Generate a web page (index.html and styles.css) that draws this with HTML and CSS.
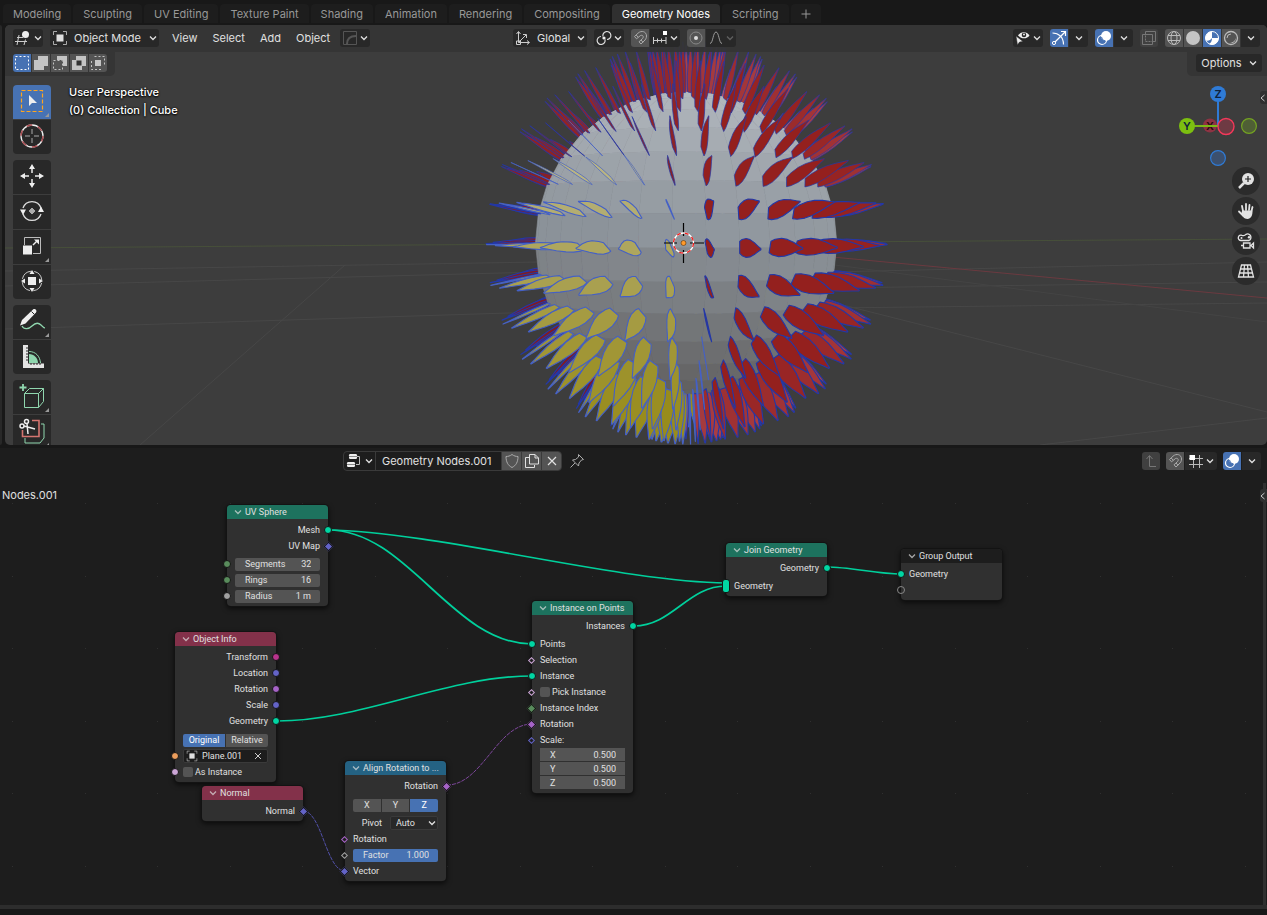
FILE: index.html
```
<!DOCTYPE html>
<html lang="en">
<head>
    <meta charset="UTF-8">
    <meta name="viewport" content="width=device-width, initial-scale=1.0">
    <title>Geometry Nodes</title>
    <link rel="stylesheet" href="styles.css">
</head>
<body>
    <svg class="defs" width="0" height="0">
        <symbol id="chev" viewBox="0 0 8 8"><path d="M1 2.5 4 5.5 7 2.5" fill="none" stroke="currentColor" stroke-width="1.3"/></symbol>
        <symbol id="magnet" viewBox="0 0 16 16"><path d="M2.500 6.500 6 3.200C9.500 0 14.500 1.500 14.500 6c0 2.300-1 3.600-2.500 5l-3 3-2-2.200 3.300-3C12 7.200 11.300 4.600 8.500 5.500L4.500 8.800z M4.200 5l2 2.200M9 10l2 2.200" fill="none" stroke="currentColor"/></symbol>
        <symbol id="overlay" viewBox="0 0 16 16"><circle cx="10" cy="6" r="5" fill="currentColor"/><circle cx="6" cy="10" r="4.500" fill="none" stroke="currentColor" stroke-width="1.200"/><path d="M5.500 7a4.500 4.500 0 0 0 4 4" fill="none" stroke="#4772b3"/></symbol>
        <symbol id="objbox" viewBox="0 0 16 16"><path d="M4.500 4.500h7v7h-7z" fill="currentColor"/><path d="M1.500 5V1.500H5M11 1.500h3.500V5M14.500 11v3.500H11M5 14.500H1.500V11" fill="none" stroke="currentColor" opacity=".7"/></symbol>
    </svg>

    <nav class="tabs">
        <button class="tab">Modeling</button>
        <button class="tab">Sculpting</button>
        <button class="tab">UV Editing</button>
        <button class="tab">Texture Paint</button>
        <button class="tab">Shading</button>
        <button class="tab">Animation</button>
        <button class="tab">Rendering</button>
        <button class="tab">Compositing</button>
        <button class="tab active">Geometry Nodes</button>
        <button class="tab">Scripting</button>
        <button class="tab add" aria-label="Add workspace"><svg width="10" height="10" viewBox="0 0 10 10"><path d="M5 .5v9M.5 5h9" stroke="currentColor"/></svg></button>
    </nav>

    <div class="upper">
        <div class="side-strip"></div>
        <main class="viewport">
            <svg class="scene" viewBox="5 25 1262 420" preserveAspectRatio="xMidYMid slice">
                <!-- floor grid -->
                <g fill="none" stroke="#474747">
                    <path d="M140 445 345 265M5 329 540 312M5 286 540 272M5 271 540 262"/>
                    <path d="M835 303 1267 412M830 272 1267 262M830 288 1267 282M830 308 1267 303M1040 445 1267 418" />
                    <path d="M835 265 1267 322" stroke="#444"/>
                </g>
                <path d="M5 248 684 243 1267 239" stroke="#47503a" fill="none"/>
                <path d="M684 243 1267 298" stroke="#6b3a40" fill="none"/>
                <g id="mesh"></g>
                <!-- 3D cursor -->
                <path d="M664 243h13M690 243h14M683.500 223v13M683.500 250v13" stroke="#000" stroke-width="1.200"/>
                <circle cx="683.500" cy="243" r="10" fill="none" stroke="#fff" stroke-width="1.300"/>
                <circle cx="683.500" cy="243" r="10" fill="none" stroke="#f02020" stroke-width="1.300" stroke-dasharray="4 4"/>
                <circle cx="683.500" cy="243" r="2.500" fill="#ff9a2a" stroke="#5a3208" stroke-width=".6"/>
            </svg>

            <header class="bar">
                <div class="group">
                    <button class="btn menu" aria-label="Editor type">
                        <svg width="18" height="16" viewBox="0 0 18 16"><path d="M3 7.500h6M1 11.500h12M5 5 3 15M11.500 9.500 10 15" stroke="#ccc" fill="none"/><circle cx="11.500" cy="4.500" r="3.500" fill="#eee"/></svg>
                        <svg class="chev"><use href="#chev"/></svg>
                    </button>
                    <label class="btn drop mode">
                        <svg width="16" height="16"><use href="#objbox"/></svg>
                        <select aria-label="Mode"><option>Object Mode</option></select>
                        <svg class="chev"><use href="#chev"/></svg>
                    </label>
                    <div class="menus">
                        <button>View</button>
                        <button>Select</button>
                        <button>Add</button>
                        <button>Object</button>
                    </div>
                    <button class="btn menu" aria-label="Curve">
                        <svg width="16" height="16" viewBox="0 0 16 16"><path d="M1.500 1.500h13v13h-13z" fill="none" stroke="#555"/><path d="M5 14c0-5 3-8 9-8" fill="none" stroke="#555" stroke-width="2"/></svg>
                        <svg class="chev"><use href="#chev"/></svg>
                    </button>
                </div>
                <div class="group center">
                    <label class="btn drop orient">
                        <svg width="16" height="16" viewBox="0 0 16 16"><path d="M3.500 2v10.500H14M1.500 4l2-2.500 2 2.500M12 10.500l2.500 2-2.500 2M3.500 12.500 11 5M8 4.500h3.500V8M1.500 11h4v3.500h-4z" fill="none" stroke="#ccc"/></svg>
                        <select aria-label="Orientation"><option>Global</option></select>
                        <svg class="chev"><use href="#chev"/></svg>
                    </label>
                    <button class="btn menu" aria-label="Pivot point">
                        <svg width="16" height="16" viewBox="0 0 16 16"><g fill="none" stroke="#ddd" stroke-width="1.200"><path d="M7 6.500A4 4 0 1 1 11 9.500M9 9.500A4 4 0 1 1 5 6.500"/></g><circle cx="8" cy="8" r="1.600" fill="#eee"/></svg>
                        <svg class="chev"><use href="#chev"/></svg>
                    </button>
                    <div class="join">
                        <button class="btn icon lit" aria-label="Snap"><svg width="16" height="16"><use href="#magnet"/></svg></button>
                        <button class="btn menu" aria-label="Snap to">
                            <svg width="16" height="16" viewBox="0 0 16 16"><path d="M1.500 7v7M14 7v7M1 10.500h13M5.500 8.500v4M9.500 8.500v4" stroke="#ccc"/><path d="M11 1h4v4h-4z" fill="#fff"/></svg>
                            <svg class="chev"><use href="#chev"/></svg>
                        </button>
                    </div>
                    <div class="join">
                        <button class="btn icon lit" aria-label="Proportional editing"><svg width="16" height="16" viewBox="0 0 16 16"><circle cx="8" cy="8" r="6" fill="none" stroke="#888"/><circle cx="8" cy="8" r="2" fill="#ddd"/></svg></button>
                        <button class="btn menu dim" aria-label="Falloff">
                            <svg width="16" height="16" viewBox="0 0 16 16"><path d="M2 13.500c3 0 3-11.500 6-11.500s3 11.500 6 11.500" fill="none" stroke="#999"/></svg>
                            <svg class="chev"><use href="#chev"/></svg>
                        </button>
                    </div>
                </div>
                <div class="group right">
                    <button class="btn menu" aria-label="Visibility">
                        <svg width="16" height="16" viewBox="0 0 16 16"><path d="M3 5.500C5.500 1 12 1 14.500 5.500 12 9 7 9.500 3 5.500z" fill="#eee"/><circle cx="9" cy="5" r="2.300" fill="#282828"/><circle cx="9" cy="4.500" r="1" fill="#eee"/><path d="M1 6l7 5.500-3.500.5L2.500 15z" fill="#eee" stroke="#282828" stroke-width=".5"/></svg>
                        <svg class="chev"><use href="#chev"/></svg>
                    </button>
                    <div class="join">
                        <button class="btn icon on" aria-label="Gizmos"><svg width="16" height="16" viewBox="0 0 16 16"><path d="M1.500 3c6 0 11 4 11 11.500M4 12 14 2M10 1.500h4.500V6" fill="none" stroke="#fff" stroke-width="1.200"/><circle cx="3" cy="13" r="1.600" fill="none" stroke="#fff"/></svg></button>
                        <button class="btn chevbtn" aria-label="Gizmo options"><svg class="chev"><use href="#chev"/></svg></button>
                    </div>
                    <div class="join">
                        <button class="btn icon on" aria-label="Overlays"><svg width="16" height="16"><use href="#overlay"/></svg></button>
                        <button class="btn chevbtn" aria-label="Overlay options"><svg class="chev"><use href="#chev"/></svg></button>
                    </div>
                    <button class="btn icon faint" aria-label="X-ray"><svg width="16" height="16" viewBox="0 0 16 16"><path d="M1.500 4.500h10v10h-10zM4.500 4V1.500h10v10H12" fill="none" stroke="#777"/><path d="M4.500 5.500v6h7" fill="none" stroke="#777" stroke-dasharray="2 1"/></svg></button>
                    <div class="join">
                        <button class="btn icon lit" aria-label="Wireframe"><svg width="16" height="16" viewBox="0 0 16 16"><g fill="none" stroke="#bbb"><circle cx="8" cy="8" r="6.500"/><ellipse cx="8" cy="8" rx="3" ry="6.500"/><path d="M2 5.500h12M2 10.500h12"/></g></svg></button>
                        <button class="btn icon lit" aria-label="Solid"><svg width="16" height="16" viewBox="0 0 16 16"><circle cx="8" cy="8" r="7" fill="#c4c4c4"/></svg></button>
                        <button class="btn icon on" aria-label="Material preview"><svg width="16" height="16" viewBox="0 0 16 16"><circle cx="8" cy="8" r="6.500" fill="#4772b3" stroke="#fff"/><path d="M8 1.500A6.500 6.500 0 0 0 2 10.500c2 .5 4.500 0 6-2.500z" fill="#fff"/><path d="M8 8h6.500A6.500 6.500 0 0 1 5 14c2-1 3-3 3-6z" fill="#fff"/></svg></button>
                        <button class="btn icon lit" aria-label="Rendered"><svg width="16" height="16" viewBox="0 0 16 16"><circle cx="8" cy="8" r="6.500" fill="none" stroke="#bbb" stroke-width="1.300"/><path d="M4 8a4 4 0 0 1 4-4" fill="none" stroke="#bbb"/><path d="M13 8a5 5 0 0 1-6 5c3-.5 5-2 6-5z" fill="#ccc"/></svg></button>
                        <button class="btn chevbtn" aria-label="Shading options"><svg class="chev"><use href="#chev"/></svg></button>
                    </div>
                </div>
            </header>

            <div class="subbar">
                <div class="select-modes join">
                    <button class="btn icon on" aria-label="Set"><svg width="16" height="16" viewBox="0 0 16 16"><path d="M1.500 1.500h13v13h-13z" fill="none" stroke="#fff" stroke-dasharray="2 2"/></svg></button>
                    <button class="btn icon lit" aria-label="Extend"><svg width="16" height="16" viewBox="0 0 16 16"><path d="M5 1h10v10h-4v4H1V5h4z" fill="#c4c4c4"/></svg></button>
                    <button class="btn icon lit" aria-label="Subtract"><svg width="16" height="16" viewBox="0 0 16 16"><path d="M5 1h10v10h-4V5H5z" fill="#c4c4c4"/><path d="M1.500 5.500h9v9h-9z" fill="none" stroke="#c4c4c4" stroke-dasharray="2 2"/></svg></button>
                    <button class="btn icon lit" aria-label="Difference"><svg width="16" height="16" viewBox="0 0 16 16"><path d="M5 1h10v10h-4v4H1V5h4z" fill="#c4c4c4"/><path d="M5.500 5.500h5v5h-5z" fill="#333"/></svg></button>
                    <button class="btn icon lit" aria-label="Intersect"><svg width="16" height="16" viewBox="0 0 16 16"><path d="M5 5h6v6H5z" fill="#c4c4c4"/><path d="M4.500 1.500h10v10M11 14.500H1.500v-10" fill="none" stroke="#c4c4c4" stroke-dasharray="2 2"/></svg></button>
                </div>
                <div class="options-tab">
                    <button class="btn options">Options <svg class="chev"><use href="#chev"/></svg></button>
                </div>
            </div>

            <div class="work">
                <div class="toolbar">
                    <div class="tools">
                        <button class="tool on more" aria-label="Select box"><svg viewBox="0 0 26 26"><path d="M2.500 2.500h21v21h-21z" fill="none" stroke="#ffa51f" stroke-width="1.200" stroke-dasharray="4 2"/><path d="M10 7v11l3-3h5z" fill="#eee"/></svg></button>
                        <button class="tool" aria-label="Cursor"><svg viewBox="0 0 26 26"><circle cx="13" cy="13" r="11" fill="none" stroke="#eee" stroke-width="1.300"/><circle cx="13" cy="13" r="11" fill="none" stroke="#a8474c" stroke-width="1.400" stroke-dasharray="5.700 5.800"/><path d="M13 6v5M13 15v5M6 13h5M15 13h5" stroke="#aaa"/></svg></button>
                    </div>
                    <div class="tools">
                        <button class="tool" aria-label="Move"><svg viewBox="0 0 26 26"><path d="M13 1l3 5h-6zM13 25l3-5h-6zM1 13l5-3v6zM25 13l-5-3v6z" fill="#eee"/><path d="M13 6v4M13 16v4M6 13h4M16 13h4" stroke="#eee" stroke-width="1.500"/></svg></button>
                        <button class="tool" aria-label="Rotate"><svg viewBox="0 0 26 26"><path d="M4 10a9.500 9.500 0 0 1 18 0M22 16a9.500 9.500 0 0 1-18 0" fill="none" stroke="#ddd" stroke-width="1.300"/><path d="M13 10l3 3-3 3-3-3z" fill="#aaa" stroke="#aaa"/><path d="M1 11.500h6L4 17zM19 14h6l-3-5.500z" fill="#eee"/></svg></button>
                        <button class="tool more" aria-label="Scale"><svg viewBox="0 0 26 26"><path d="M5.500 12V4.500h16v16H14" fill="none" stroke="#bbb"/><path d="M4 12.500h9v9H4z" fill="#eee"/><path d="M14 12l4-4" stroke="#eee" stroke-width="1.500"/><path d="M15 6.500h5v5z" fill="#eee"/></svg></button>
                        <button class="tool" aria-label="Transform"><svg viewBox="0 0 26 26"><circle cx="13" cy="13" r="9.800" fill="none" stroke="#ccc" stroke-dasharray="12 3.400" stroke-dashoffset="-2"/><path d="M9 9h8v8H9z" fill="#eee"/><path d="M13 2l2.500 4h-5zM13 24l2.500-4h-5zM2 13l4-2.500v5zM24 13l-4-2.500v5z" fill="#eee"/></svg></button>
                    </div>
                    <div class="tools">
                        <button class="tool more" aria-label="Annotate"><svg viewBox="0 0 26 26"><path d="M3 18c2 4 7 3 10 0s6-4 9-1 2 2 4 3" fill="none" stroke="#8fd6ae" stroke-width="1.300"/><path d="M1 17.500 3 12 14 1.500c2-1.500 4.500 1 3 3L6.500 15.500z" fill="#eee"/><path d="M12.500 3.500l3 3" stroke="#282828"/></svg></button>
                        <button class="tool" aria-label="Measure"><svg viewBox="0 0 26 26"><path d="M10 11c5 0 9 4 9 9h-9z" fill="#8fd6ae"/><path d="M10 8.500c6.500 0 11 4.500 11.500 11.500" fill="none" stroke="#8fd6ae"/><path d="M4 2h5v18.500h16V25H4z" fill="#e4e4e4"/><path d="M9 5H7M9 8H7M9 11H7M9 14H7M9 17H7M12 20v2M15 20v2M18 20v2M21 20v2" stroke="#282828"/></svg></button>
                    </div>
                    <div class="tools">
                        <button class="tool more" aria-label="Add cube"><svg viewBox="0 0 26 26"><path d="M5.500 10.500h14v14h-14zM5.500 10.500l5-5h14l-5 5M24.500 5.500v13l-5 6" fill="none" stroke="#8fd6ae"/><path d="M4 1v7M.5 4.500h7" stroke="#8fd6ae" stroke-width="1.800"/></svg></button>
                        <button class="tool more" aria-label="Trim"><svg viewBox="0 0 26 26"><path d="M6 20v5h15l4-5V6h-3" fill="none" stroke="#8fd6ae"/><path d="M13 2.500h7v16H3.500V12" fill="none" stroke="#d3746f" stroke-width="1.600"/><g fill="none" stroke="#eee" stroke-width="1.500"><circle cx="3" cy="8" r="2"/><circle cx="7.500" cy="3.500" r="2"/><path d="M5 8l11 3M8 5.500 9 16"/></g></svg></button>
                    </div>
                </div>
                <div class="info">
                    <div>User Perspective</div>
                    <div>(0) Collection | Cube</div>
                </div>
                <div class="nav-column">
                    <svg class="gizmo" width="82" height="82" viewBox="1178 85 82 82">
                        <circle cx="1210" cy="125.500" r="7" fill="#8d3343"/>
                        <text x="1210" y="130" class="axis axis-x">X</text>
                        <path d="M1218 126V100" stroke="#2f7bd6" stroke-width="2"/>
                        <path d="M1218 126h-26" stroke="#7cb716" stroke-width="2"/>
                        <circle cx="1218" cy="94" r="8" fill="#2f7bd6"/>
                        <text x="1218" y="98" class="axis">Z</text>
                        <circle cx="1187" cy="126" r="8" fill="#7cbf10"/>
                        <text x="1187" y="130" class="axis">Y</text>
                        <circle cx="1226" cy="126.500" r="8" fill="#6e3a43" stroke="#f4385a" stroke-width="1.400"/>
                        <circle cx="1249" cy="126" r="7.400" fill="#4f5f35" stroke="#74a322" stroke-width="1.200"/>
                        <circle cx="1218" cy="158" r="7.400" fill="#3c506e" stroke="#2f7bd6" stroke-width="1.200"/>
                    </svg>
                    <button class="nav" aria-label="Zoom"><svg width="18" height="18" viewBox="0 0 18 18"><circle cx="11" cy="7" r="6" fill="#e2e2e2"/><path d="M7 11l-5 5" stroke="#e2e2e2" stroke-width="2.500"/><path d="M11 4v6M8 7h6" stroke="#222" stroke-width="1.200"/></svg></button>
                    <button class="nav" aria-label="Pan"><svg width="18" height="18" viewBox="0 0 18 18"><path d="M6 9 5 4M9 8V2M12 8l.5-5M14.500 9l1-4M2 9.500l4 4" stroke="#e2e2e2" stroke-width="1.800" stroke-linecap="round"/><path d="M5 8.500h10.400c.5 4.500-1.500 8.500-5 8.500-3.500 0-5-3-6-5z" fill="#e2e2e2"/></svg></button>
                    <button class="nav" aria-label="Camera"><svg width="18" height="18" viewBox="0 0 18 18"><g fill="none" stroke="#e2e2e2" stroke-width="1.300"><path d="M4 8.500a2.700 2.700 0 1 1 1-5.200c1.500.5 3 .2 4-1a3.300 3.300 0 1 1 3 6.200z"/><path d="M6.500 11h6.500v5H6.500zM4 13.500h2M16.500 11v5L14 13.500z"/></g><circle cx="4.500" cy="6" r="1" fill="#e2e2e2"/><circle cx="12" cy="5.200" r="1.200" fill="#e2e2e2"/></svg></button>
                    <button class="nav" aria-label="Perspective"><svg width="18" height="18" viewBox="0 0 18 18"><path d="M4.500 3h9l3 12h-15zM3.500 7h11M2.500 11h13M7.500 3l-1 12M10.500 3l1 12" fill="none" stroke="#e2e2e2" stroke-width="1.300"/></svg></button>
                </div>
            </div>
            <button class="sidebar-toggle" aria-label="Show sidebar"><svg width="5" height="8" viewBox="0 0 5 8"><path d="M4.500 1 1 4l3.500 3" fill="none" stroke="#ccc"/></svg></button>
        </main>
    </div>

    <section class="editor">
        <svg class="wires">
            <defs>
                <pattern id="dots" x="12" y="55" width="145" height="145" patternUnits="userSpaceOnUse">
                    <path d="M0 0h1v1H0zM73 0h1v1h-1zM0 73h1v1H0zM73 73h1v1h-1z" fill="#303030"/>
                </pattern>
            </defs>
            <rect width="100%" height="100%" fill="url(#dots)"/>
            <g class="wire">
                <path d="M328 82C438 84 620 134 726 135"/>
                <path d="M328 82C408 82 452 196 532 196"/>
                <path d="M277 273C362 273 447 228 532 228"/>
                <path d="M634 178C672 178 688 138 726 138"/>
                <path d="M827 119C850 119 878 126 901 126"/>
            </g>
            <path class="wire-thin rot" d="M447 337C482 337 497 276 532 276"/>
            <path class="wire-thin vec" d="M303 363C322 363 326 423 345 423"/>
        </svg>

        <header class="node-bar">
            <div class="datablock">
                <button class="cell type" aria-label="Browse node tree">
                    <svg width="16" height="16" viewBox="0 0 16 16"><rect x="3" y="1" width="8" height="5" rx="1.200" fill="#eee"/><rect x="1" y="9" width="8" height="5" rx="1.200" fill="#eee"/><path d="M3 3.500h8M1 11.500h8" stroke="#888"/><path d="M11 3.500h2.500v8H10" fill="none" stroke="#bbb"/></svg>
                    <svg class="chev"><use href="#chev"/></svg>
                </button>
                <input class="tree-name" aria-label="Node tree name" value="Geometry Nodes.001">
                <button class="cell lit" aria-label="Fake user"><svg width="16" height="16" viewBox="0 0 16 16"><path d="M8 1.500c2 1.500 4 2 6 2 0 5.500-2 9-6 11-4-2-6-5.500-6-11 2 0 4-.5 6-2z" fill="none" stroke="#aaa"/></svg></button>
                <button class="cell lit" aria-label="New"><svg width="16" height="16" viewBox="0 0 16 16"><path d="M5.500 1.500H11l3.500 3.500v6h-9zM11 1.500V5h3.500M5 4.500H1.500v10h9V12" fill="none" stroke="#e0e0e0"/></svg></button>
                <button class="cell lit" aria-label="Unlink"><svg width="16" height="16" viewBox="0 0 16 16"><path d="M4 4l8 8M12 4l-8 8" stroke="#e0e0e0" stroke-width="1.200"/></svg></button>
            </div>
            <button class="pin" aria-label="Pin"><svg width="16" height="16" viewBox="0 0 16 16"><path d="M9.500 1.500l5 5-2 .5-2.500 3-.5 3-6-6 3-.5 3-2.500zM6 10l-4.500 4.500" fill="none" stroke="#aaa"/></svg></button>
            <div class="node-tools">
                <button class="btn icon faint" aria-label="Parent"><svg width="16" height="16" viewBox="0 0 16 16"><path d="M6.500 3v10.500H13M3.500 6l3-3.500 3 3.500" fill="none" stroke="#777"/></svg></button>
                <div class="join">
                    <button class="btn icon lit" aria-label="Snap"><svg width="16" height="16"><use href="#magnet"/></svg></button>
                    <button class="btn menu" aria-label="Snap to"><svg width="16" height="16" viewBox="0 0 16 16"><path d="M5.500 2v13M11.500 2v13M1 5.500h14M1 11.500h14" stroke="#bbb"/><path d="M1.500 2H7v5H1.500z" fill="#fff"/></svg><svg class="chev"><use href="#chev"/></svg></button>
                </div>
                <div class="join">
                    <button class="btn icon on" aria-label="Overlays"><svg width="16" height="16"><use href="#overlay"/></svg></button>
                    <button class="btn chevbtn" aria-label="Overlay options"><svg class="chev"><use href="#chev"/></svg></button>
                </div>
            </div>
        </header>
        <div class="crumb">Nodes.001</div>

        <article class="node uv-sphere">
            <h2 class="geo"><svg class="chev"><use href="#chev"/></svg>UV Sphere</h2>
            <div class="row out">Mesh<i class="sock green"></i></div>
            <div class="row out">UV Map<i class="sock dia blue"></i></div>
            <label class="row space"><i class="sock int"></i><span class="field"><span>Segments</span><input value="32"></span></label>
            <label class="row"><i class="sock int"></i><span class="field"><span>Rings</span><input value="16"></span></label>
            <label class="row"><i class="sock float"></i><span class="field"><span>Radius</span><input value="1 m"></span></label>
        </article>

        <article class="node object-info">
            <h2 class="inp"><svg class="chev"><use href="#chev"/></svg>Object Info</h2>
            <div class="row out">Transform<i class="sock matrix"></i></div>
            <div class="row out">Location<i class="sock blue"></i></div>
            <div class="row out">Rotation<i class="sock purple"></i></div>
            <div class="row out">Scale<i class="sock blue"></i></div>
            <div class="row out">Geometry<i class="sock green"></i></div>
            <div class="row choice"><div class="seg"><button class="on">Original</button><button>Relative</button></div></div>
            <div class="row"><i class="sock object"></i><div class="picker"><svg width="12" height="12" viewBox="0 0 16 16"><use href="#objbox"/></svg><input aria-label="Object" value="Plane.001"><button aria-label="Clear"><svg width="8" height="8" viewBox="0 0 8 8"><path d="M1 1l6 6M7 1 1 7" stroke="#ccc"/></svg></button></div></div>
            <label class="row check"><i class="sock bool"></i><input type="checkbox">As Instance</label>
        </article>

        <article class="node normal">
            <h2 class="inp"><svg class="chev"><use href="#chev"/></svg>Normal</h2>
            <div class="row out">Normal<i class="sock dia blue"></i></div>
        </article>

        <article class="node align">
            <h2 class="conv"><svg class="chev"><use href="#chev"/></svg>Align Rotation to ...</h2>
            <div class="row out">Rotation<i class="sock dia purple"></i></div>
            <div class="row choice"><div class="seg"><button>X</button><button>Y</button><button class="on">Z</button></div></div>
            <label class="row space pivot"><span>Pivot</span><span class="mini"><select><option>Auto</option></select><svg class="chev"><use href="#chev"/></svg></span></label>
            <div class="row"><i class="sock dia purple open"></i>Rotation</div>
            <label class="row"><i class="sock dia float open"></i><span class="field full"><span>Factor</span><input value="1.000"></span></label>
            <div class="row"><i class="sock dia blue"></i>Vector</div>
        </article>

        <article class="node instance">
            <h2 class="geo"><svg class="chev"><use href="#chev"/></svg>Instance on Points</h2>
            <div class="row out">Instances<i class="sock green"></i></div>
            <div class="row space"><i class="sock green"></i>Points</div>
            <div class="row"><i class="sock dia bool open"></i>Selection</div>
            <div class="row"><i class="sock green"></i>Instance</div>
            <label class="row check"><i class="sock dia bool open"></i><input type="checkbox">Pick Instance</label>
            <div class="row"><i class="sock dia int"></i>Instance Index</div>
            <div class="row"><i class="sock dia purple"></i>Rotation</div>
            <div class="row"><i class="sock dia blue open"></i>Scale:</div>
            <div class="vector">
                <label class="field"><span>X</span><input value="0.500"></label>
                <label class="field"><span>Y</span><input value="0.500"></label>
                <label class="field"><span>Z</span><input value="0.500"></label>
            </div>
        </article>

        <article class="node join-geometry">
            <h2 class="geo"><svg class="chev"><use href="#chev"/></svg>Join Geometry</h2>
            <div class="row out">Geometry<i class="sock green"></i></div>
            <div class="row space"><i class="sock green multi"></i>Geometry</div>
        </article>

        <article class="node group-output">
            <h2 class="plain"><svg class="chev"><use href="#chev"/></svg>Group Output</h2>
            <div class="row"><i class="sock green"></i>Geometry</div>
            <div class="row"><i class="sock virtual"></i></div>
        </article>

        <div class="scrollbar"></div>
        <button class="sidebar-toggle low" aria-label="Show sidebar"><svg width="5" height="8" viewBox="0 0 5 8"><path d="M4.500 1 1 4l3.500 3" fill="none" stroke="#ccc"/></svg></button>
    </section>
    <footer class="status"></footer>

    <script src="script.js"></script>
</body>
</html>
```
FILE: styles.css
```
* {
    box-sizing: border-box;
}

body {
    margin: 0;
    height: 100vh;
    display: flex;
    flex-direction: column;
    background: #181818;
    color: #e0e0e0;
    font-family: Inter, "Liberation Sans", sans-serif;
    font-size: 11px;
    overflow: hidden;
}

button, input, select {
    font: inherit;
    color: inherit;
    border: 0;
    padding: 0;
    margin: 0;
    background: none;
    outline: none;
}

svg {
    display: block;
    flex: none;
}

.defs {
    position: absolute;
}

.chev {
    width: 8px;
    height: 8px;
}

/* workspace tabs */
.tabs {
    display: flex;
    flex: none;
    gap: 2px;
    height: 25px;
    padding: 4px 3px 2px;
}

.tab {
    padding: 0 10px;
    color: #989898;
    background: #1d1d1d;
    border-radius: 4px 4px 0 0;
    white-space: nowrap;
}

.tab.active {
    color: #fff;
    background: #303030;
}

/* 3D viewport */
.upper {
    display: flex;
    flex: 420 1 0;
    min-height: 0;
    gap: 3px;
}

.side-strip {
    width: 2px;
    background: #282828;
    border-radius: 0 4px 4px 0;
}

.viewport {
    position: relative;
    display: flex;
    flex-direction: column;
    flex: 1;
    min-width: 0;
    overflow: hidden;
    background: #3d3d3d;
    border-radius: 5px;
}

.scene {
    position: absolute;
    width: 100%;
    height: 100%;
}

.bar {
    position: relative;
    display: flex;
    flex: none;
    align-items: center;
    height: 27px;
    padding: 0 7px 1px 8px;
    background: rgba(53, 53, 53, 0.93);
}

.group {
    display: flex;
    align-items: center;
    gap: 7px;
}

.group.center {
    margin-left: 143px;
}

.group.right {
    margin-left: auto;
}

.join {
    display: flex;
    gap: 1px;
}

.btn {
    display: flex;
    align-items: center;
    justify-content: center;
    height: 18px;
    background: #282828;
    border-radius: 3px;
}

.join .btn:not(:first-child) {
    border-top-left-radius: 0;
    border-bottom-left-radius: 0;
}

.join .btn:not(:last-child) {
    border-top-right-radius: 0;
    border-bottom-right-radius: 0;
}

.btn.icon {
    width: 18px;
}

.btn.menu {
    width: 30px;
    gap: 2px;
}

.btn.chevbtn {
    width: 19px;
}

.lit,
.btn.lit {
    background: #545454;
    color: #aaa;
}

.btn.on {
    background: #4772b3;
    color: #fff;
}

.btn.faint {
    background: #404040;
}

.btn.dim .chev {
    opacity: 0.3;
}

.drop {
    justify-content: flex-start;
    gap: 4px;
    padding: 0 2px;
}

.drop.mode {
    width: 109px;
}

.drop.orient {
    width: 74px;
}

.drop select {
    appearance: none;
    flex: 1;
    min-width: 0;
    padding-left: 2px;
}

.menus {
    display: flex;
    gap: 15px;
    margin: 0 3px 0 6px;
}

.subbar {
    position: relative;
    display: flex;
    flex: none;
    justify-content: space-between;
    height: 24px;
}

.select-modes,
.options-tab {
    padding: 2px 8px;
    background: #353535;
    border-radius: 0 0 5px 0;
}

.options-tab {
    padding: 2px 5px 2px 9px;
    border-radius: 0 0 0 5px;
}

.btn.options {
    width: 66px;
    gap: 7px;
}

.work {
    position: relative;
    display: flex;
    flex: 1;
    min-height: 0;
    padding: 9px 7px 0 8px;
}

.toolbar {
    display: flex;
    flex-direction: column;
    gap: 6px;
}

.tools {
    display: flex;
    flex: none;
    flex-direction: column;
    gap: 1px;
    border-radius: 4px;
    overflow: hidden;
}

.tool {
    position: relative;
    display: flex;
    align-items: center;
    justify-content: center;
    width: 38px;
    height: 34px;
    padding-bottom: 2px;
    background: #282828;
}

.tool svg {
    width: 26px;
    height: 26px;
}

.tool.on {
    background: #4772b3;
}

.tool.more::after {
    content: "";
    position: absolute;
    right: 2px;
    bottom: 2px;
    border: 2px solid #999;
    border-top-color: transparent;
    border-left-color: transparent;
}

.info {
    margin-left: 18px;
    margin-top: -2px;
    font-weight: 500;
    line-height: 18px;
    color: #fff;
    text-shadow: 0 0 2px #000, 0 1px 2px #000;
}

.nav-column {
    display: flex;
    flex-direction: column;
    align-items: flex-end;
    gap: 2px;
    margin-left: auto;
}

.gizmo {
    margin-bottom: -2px;
}

.axis {
    font-size: 11px;
    font-weight: 600;
    fill: #10233c;
    text-anchor: middle;
}

.axis-x {
    fill: #26090f;
}

.nav {
    display: flex;
    align-items: center;
    justify-content: center;
    width: 28px;
    height: 28px;
    border-radius: 50%;
    background: #2b2b2b;
}

.sidebar-toggle {
    position: absolute;
    right: 0;
    top: 66px;
    width: 7px;
    height: 13px;
    background: #303030;
    border-radius: 3px 0 0 3px;
}

/* node editor */
.editor {
    position: relative;
    flex: 457 1 0;
    min-height: 0;
    margin-top: 3px;
    overflow: hidden;
    background: #1d1d1d;
}

.wires {
    position: absolute;
    width: 100%;
    height: 100%;
}

.wire path {
    fill: none;
    stroke: #00d09c;
    stroke-width: 1.7px;
}

.wire-thin {
    fill: none;
    stroke-width: 1px;
    stroke-dasharray: 4 1;
}

.rot {
    stroke: #7d479b;
}

.vec {
    stroke: #5150a8;
}

.node-bar {
    position: relative;
    display: flex;
    align-items: center;
    height: 26px;
    padding: 0 6px 0 343px;
}

.datablock {
    display: flex;
    height: 20px;
    border: 1px solid #3a3a3a;
    border-radius: 4px;
    overflow: hidden;
}

.cell {
    display: flex;
    align-items: center;
    justify-content: center;
    width: 20px;
    border-left: 1px solid #3a3a3a;
}

.cell.type {
    width: 31px;
    gap: 3px;
    border-left: 0;
}

.tree-name {
    width: 126px;
    padding-left: 6px;
    border-left: 1px solid #3a3a3a;
}

.pin {
    margin-left: 7px;
}

.node-tools {
    display: flex;
    gap: 6px;
    margin-left: auto;
}

.node-tools .menu {
    width: 32px;
}

.crumb {
    position: relative;
    padding: 14px 2px;
    line-height: 14px;
}

.node {
    position: absolute;
    width: 101px;
    padding-bottom: 2px;
    background: #303030;
    border-radius: 4px;
    box-shadow: 0 0 0 1px #131313, 0 2px 5px 1px rgba(0, 0, 0, 0.6);
    font-family: Roboto, "Liberation Sans", sans-serif;
    font-size: 9px;
}

.uv-sphere { left: 227px; top: 57px; }
.object-info { left: 175px; top: 184px; }
.normal { left: 202px; top: 338px; }
.align { left: 345px; top: 313px; }
.instance { left: 532px; top: 153px; }
.join-geometry { left: 726px; top: 95px; }
.group-output { left: 901px; top: 101px; }

.node h2 {
    display: flex;
    align-items: center;
    gap: 3px;
    height: 14px;
    margin: 0 0 3px;
    padding: 0 0 1px 7px;
    font-size: 9px;
    font-weight: 400;
    white-space: nowrap;
    border-radius: 4px 4px 0 0;
}

.node h2 .chev {
    opacity: 0.7;
}

.geo { background: #1d725e; }
.inp { background: #83314a; }
.conv { background: #246283; }
.plain { background: #1d1d1d; }

.row {
    position: relative;
    display: flex;
    align-items: center;
    height: 16px;
    padding: 0 8px;
    white-space: nowrap;
}

.row.out {
    justify-content: flex-end;
}

.row.space {
    margin-top: 2px;
}

.row.choice {
    margin-top: 3px;
}

.sock {
    position: absolute;
    left: -4px;
    width: 8px;
    height: 8px;
    border: 1px solid #151515;
    border-radius: 50%;
}

.out .sock {
    left: auto;
    right: -4px;
}

.sock.dia {
    border-radius: 0;
    transform: rotate(45deg);
    width: 7px;
    height: 7px;
}

.green { background: #00d6a3; }
.blue { background: #6363c7; }
.purple { background: #a663c7; }
.int { background: #598c5c; }
.float { background: #a1a1a1; }
.matrix { background: #b8338c; }
.object { background: #ed9e5c; }
.bool { background: #cca6d6; }

.sock.open {
    left: -3px;
    width: 5px;
    height: 5px;
    background: #1d1d1d;
}

.open.purple { border-color: #a663c7; }
.open.float { border-color: #a1a1a1; }
.open.bool { border-color: #cca6d6; }
.open.blue { border-color: #6363c7; }

.sock.multi {
    height: 14px;
    border-radius: 3px;
}

.sock.virtual {
    border-color: #888;
}

.field {
    display: flex;
    flex: 1;
    align-items: center;
    justify-content: space-between;
    height: 13px;
    padding: 0 9px 0 10px;
    background: #545454;
    border-radius: 2px;
}

.field input {
    width: 26px;
    text-align: right;
}

.field.full {
    background: #4772b3;
}

.vector {
    display: flex;
    flex-direction: column;
    gap: 1px;
    margin: 0 8px 2px;
}

.vector .field {
    flex: none;
    border-radius: 0;
}

.seg {
    display: flex;
    flex: 1;
    gap: 1px;
    height: 13px;
    border-radius: 2px;
    overflow: hidden;
}

.seg button {
    flex: 1;
    background: #545454;
}

.seg .on {
    background: #4772b3;
    color: #fff;
}

.picker {
    display: flex;
    flex: 1;
    align-items: center;
    gap: 4px;
    height: 14px;
    padding: 0 5px 0 2px;
    background: #1d1d1d;
    border: 1px solid #3a3a3a;
    border-radius: 2px;
}

.picker input {
    flex: 1;
    width: 20px;
}

.check {
    gap: 2px;
}

.check input {
    appearance: none;
    width: 10px;
    height: 10px;
    background: #545454;
    border-radius: 2px;
}

.pivot {
    justify-content: flex-end;
    gap: 8px;
}

.mini {
    display: flex;
    align-items: center;
    width: 48px;
    height: 14px;
    padding: 0 1px 0 5px;
    background: #282828;
    border: 1px solid #3a3a3a;
    border-radius: 2px;
}

.mini select {
    appearance: none;
    flex: 1;
    min-width: 0;
}

.scrollbar {
    position: absolute;
    right: 1px;
    top: 35px;
    bottom: 0;
    width: 3px;
    background: #303030;
}

.sidebar-toggle.low {
    top: 41px;
}

.status {
    flex: none;
    height: 10px;
    border-top: 4px solid #2d2d2d;
}
```
FILE: script.js
```
// Sphere with one petal per vertex, aligned to the normal
const DIST = 6.45, FOCAL = 962, CX = 686, CY = 243;
const TILT = 1.5 * Math.PI / 180;
const STEP = Math.PI / 16;
const FIRST = 17.2 * Math.PI / 180;

function project(p) {
    const y = p[1] * Math.cos(TILT) - p[2] * Math.sin(TILT);
    const z = p[1] * Math.sin(TILT) + p[2] * Math.cos(TILT);
    const s = FOCAL / (DIST - z);
    return { x: CX + p[0] * s + z * 2, y: CY - y * s, z: z };
}

function normal(lat, az) {
    return [Math.cos(lat) * Math.sin(az), Math.sin(lat), Math.cos(lat) * Math.cos(az)];
}

function mix(a, b, t) {
    t = Math.max(0, Math.min(1, t));
    return "rgb(" + a.map((v, i) => Math.round(v + (b[i] - v) * t)).join(",") + ")";
}

function points(list) {
    return list.map(p => p.x.toFixed(1) + "," + p.y.toFixed(1)).join(" ");
}

// distance along the petal, half width
const profile = [[0, 0.034], [0.12, 0.046], [0.32, 0.053], [0.5, 0.048], [0.7, 0.033], [0.88, 0.014], [1, 0.003]];

function petal(lat, az) {
    const n = normal(lat, az);
    const b = az - FIRST;
    const th = [Math.sin(lat) * Math.sin(az), -Math.cos(lat), Math.sin(lat) * Math.cos(az)];
    const ph = [Math.cos(az), 0, -Math.sin(az)];
    const w = th.map((v, i) => -Math.cos(b) * v + Math.sin(b) * ph[i]);
    const at = (t, h) => project(n.map((v, i) => v * (1 + 0.32 * t) + w[i] * h));
    const list = profile.map(p => at(p[0], p[1])).concat(profile.slice().reverse().map(p => at(p[0], -p[1])));
    let area = 0;
    list.forEach((p, i) => {
        const q = list[(i + 1) % list.length];
        area += p.x * q.y - q.x * p.y;
    });
    const base = project(n);
    const red = area > 0;
    let fill;
    if (!red) fill = n[1] > 0 ? mix([172, 165, 98], [190, 186, 140], n[1] * 2) : mix([174, 166, 94], [152, 140, 28], -n[1] * 1.1);
    else if (n[0] > 0) fill = mix([186, 88, 100], [148, 32, 30], base.z * 1.3 + 0.35);
    else fill = mix([128, 28, 36], [150, 40, 42], n[1]);
    const edge = red ? "#2238a8" : "#4460c6";
    return {
        z: at(0.5, 0).z,
        back: base.z < 1 / DIST,
        svg: `<polygon points="${points(list)}" fill="${fill}" stroke="${edge}" stroke-width="${n[1] > 0.3 ? 0.7 : 1.1}" stroke-linejoin="round"/>`
    };
}

const petals = [];
for (let r = -7; r <= 7; r++) {
    for (let s = 0; s < 32; s++) petals.push(petal(r * STEP, FIRST + s * STEP));
}
petals.push(petal(Math.PI / 2, FIRST), petal(-Math.PI / 2, FIRST));
petals.sort((a, b) => a.z - b.z);

let quads = "";
for (let r = -8; r < 8; r++) {
    for (let s = 0; s < 32; s++) {
        const a = FIRST + s * STEP, l = r * STEP;
        const mid = normal(l + STEP / 2, a + STEP / 2);
        if (project(mid).z < 0.1) continue;
        const list = [[l, a], [l, a + STEP], [l + STEP, a + STEP], [l + STEP, a]].map(v => project(normal(v[0], v[1])));
        const c = mid[1] > 0
            ? mix([139, 146, 153], [178, 184, 190], mid[1] * 1.05 + mid[0] * 0.12)
            : mix([136, 142, 148], [98, 97, 97], -mid[1] * 1.15 - mid[0] * 0.15);
        quads += `<polygon points="${points(list)}" fill="${c}" stroke="${c}" stroke-width="0.6"/>`;
    }
}

document.getElementById("mesh").innerHTML =
    petals.filter(p => p.back).map(p => p.svg).join("") +
    quads +
    petals.filter(p => !p.back).map(p => p.svg).join("");
```
